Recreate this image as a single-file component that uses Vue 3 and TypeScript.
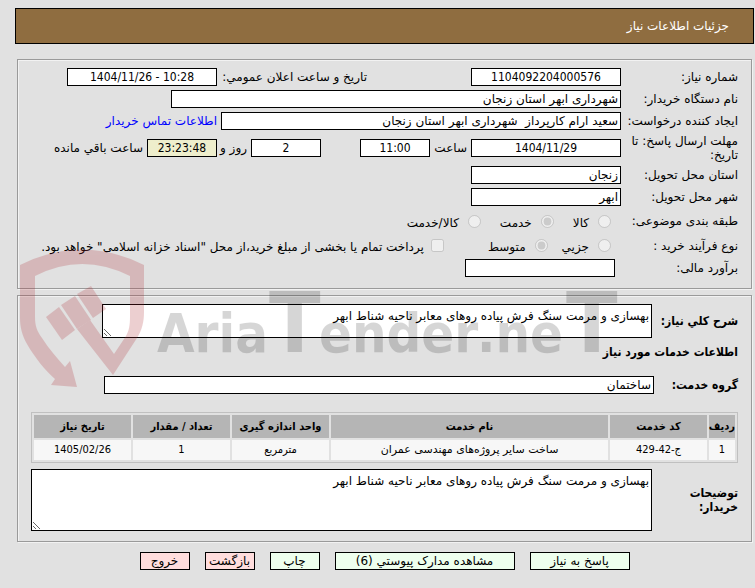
<script setup lang="ts">
import { ref } from 'vue'

interface ServiceRow {
  index: number
  code: string
  name: string
  unit: string
  amount: number
  needDate: string
}

interface Action {
  label: string
  size: 'small' | 'medium' | 'large'
  tone: 'green' | 'red'
}

const needNumber = ref('1104092204000576')
const announcedAt = ref('1404/11/26 - 10:28')
const buyer = ref('شهرداری ابهر استان زنجان')
const requester = ref('سعید ارام کارپرداز  شهرداری ابهر استان زنجان')
const deadlineDate = ref('1404/11/29')
const deadlineTime = ref('11:00')
const daysLeft = ref('2')
const timeLeft = ref('23:23:48')
const province = ref('زنجان')
const city = ref('ابهر')
const estimate = ref('')
const subject = ref('service')
const process = ref('medium')
const treasury = ref(false)
const summary = ref('بهسازی و مرمت سنگ فرش پیاده روهای معابر ناحیه شناط ابهر')
const group = ref('ساختمان')
const notes = ref('بهسازی و مرمت سنگ فرش پیاده روهای معابر ناحیه شناط ابهر')

const services: ServiceRow[] = [
  {
    index: 1,
    code: 'ج-42-429',
    name: 'ساخت سایر پروژه‌های مهندسی عمران',
    unit: 'مترمربع',
    amount: 1,
    needDate: '1405/02/26',
  },
]

const actions: Action[] = [
  { label: 'پاسخ به نیاز', size: 'medium', tone: 'green' },
  { label: 'مشاهده مدارک پیوستي (6)', size: 'large', tone: 'green' },
  { label: 'چاپ', size: 'small', tone: 'green' },
  { label: 'بازگشت', size: 'small', tone: 'red' },
  { label: 'خروج', size: 'small', tone: 'red' },
]
</script>

<template>
  <div class="page" dir="rtl" lang="fa">
    <header class="title-bar"><h1>جزئیات اطلاعات نیاز</h1></header>

    <fieldset class="panel need">
      <div class="row">
        <label class="label" for="need-number">شماره نیاز:</label>
        <input id="need-number" v-model="needNumber" class="field num w150" readonly />
        <label class="label announce" for="announced">تاریخ و ساعت اعلان عمومي:</label>
        <input id="announced" v-model="announcedAt" class="field num w150" dir="ltr" readonly />
      </div>
      <div class="row">
        <label class="label" for="buyer">نام دستگاه خریدار:</label>
        <input id="buyer" v-model="buyer" class="field w450" readonly />
      </div>
      <div class="row">
        <label class="label" for="requester">ایجاد کننده درخواست:</label>
        <input id="requester" v-model="requester" class="field w400" readonly />
        <a class="contact" href="#contact">اطلاعات تماس خریدار</a>
      </div>
      <div class="row tall">
        <label class="label" for="deadline">مهلت ارسال پاسخ: تا تاریخ:</label>
        <input id="deadline" v-model="deadlineDate" class="field num w150" readonly />
        <label class="unit hour" for="deadline-time">ساعت</label>
        <input id="deadline-time" v-model="deadlineTime" class="field num w70" readonly />
        <input id="days" v-model="daysLeft" class="field num w70 days" readonly />
        <label class="unit day" for="days">روز و</label>
        <input id="time-left" v-model="timeLeft" class="field num w70 countdown" readonly />
        <label class="remain" for="time-left">ساعت باقي مانده</label>
      </div>
      <div class="row">
        <label class="label" for="province">استان محل تحویل:</label>
        <input id="province" v-model="province" class="field w150" readonly />
      </div>
      <div class="row">
        <label class="label" for="city">شهر محل تحویل:</label>
        <input id="city" v-model="city" class="field w150" readonly />
      </div>
      <div class="row choice" role="radiogroup" aria-labelledby="subject-label">
        <span id="subject-label" class="label">طبقه بندی موضوعی:</span>
        <label class="option"><input v-model="subject" type="radio" value="goods" disabled /><span>کالا</span></label>
        <label class="option"><input v-model="subject" type="radio" value="service" disabled /><span>خدمت</span></label>
        <label class="option"><input v-model="subject" type="radio" value="both" disabled /><span>کالا/خدمت</span></label>
      </div>
      <div class="row process" role="radiogroup" aria-labelledby="process-label">
        <span id="process-label" class="label">نوع فرآیند خرید :</span>
        <label class="option"><input v-model="process" type="radio" value="minor" disabled /><span>جزیي</span></label>
        <label class="option"><input v-model="process" type="radio" value="medium" disabled /><span>متوسط</span></label>
        <label class="option treasury">
          <input v-model="treasury" type="checkbox" disabled />
          <span>پرداخت تمام یا بخشی از مبلغ خرید،از محل "اسناد خزانه اسلامی" خواهد بود.</span>
        </label>
      </div>
      <div class="row">
        <label class="label estimate" for="estimate">برآورد مالی:</label>
        <input id="estimate" v-model="estimate" class="field w150" readonly />
      </div>
    </fieldset>

    <fieldset class="panel details">
      <div class="row">
        <label class="label strong" for="summary">شرح کلي نیاز:</label>
        <textarea id="summary" v-model="summary" class="field area short" readonly></textarea>
      </div>
      <h2>اطلاعات خدمات مورد نیاز</h2>
      <div class="row group">
        <label class="label strong" for="group">گروه خدمت:</label>
        <input id="group" v-model="group" class="field w550" readonly />
      </div>
      <table class="services">
        <thead>
          <tr>
            <th class="c-index">ردیف</th>
            <th class="c-side">کد خدمت</th>
            <th>نام خدمت</th>
            <th class="c-side">واحد اندازه گیری</th>
            <th class="c-side">تعداد / مقدار</th>
            <th class="c-side">تاریخ نیاز</th>
          </tr>
        </thead>
        <tbody>
          <tr v-for="s in services" :key="s.index">
            <td>{{ s.index }}</td>
            <td>{{ s.code }}</td>
            <td class="name">{{ s.name }}</td>
            <td>{{ s.unit }}</td>
            <td>{{ s.amount }}</td>
            <td>{{ s.needDate }}</td>
          </tr>
        </tbody>
      </table>
      <div class="row">
        <label class="label strong notes" for="notes">توضیحات خریدار:</label>
        <textarea id="notes" v-model="notes" class="field area long" readonly></textarea>
      </div>
    </fieldset>

    <div class="actions">
      <button v-for="a in actions" :key="a.label" type="button" :class="[a.size, a.tone]">{{ a.label }}</button>
    </div>

    <svg class="watermark" width="610" height="150" viewBox="15 245 610 150" direction="ltr" aria-hidden="true">
      <g class="shield">
        <path d="M20 265Q82 234 144 265V312C144 322 142 330 137 338L113 375L77 329L90 320L114 354L126 336C129 331 130 325 130 317V276Q82 252 35 276V317C35 326 37 331 42 338C49 349 57 358 65 367L70 361L77 387L51 385L55 379C45 370 35 358 27 344C22 335 20 327 20 318Z" />
        <path d="M46 317L59 307L75 330L62 340Z" />
        <path d="M61 305L75 296L91 320L77 329Z" />
        <path d="M77 294L91 286L106 309L93 318Z" />
      </g>
      <g class="brand">
        <text x="157" y="352">Aria</text>
        <text class="tee" x="269" y="352">T</text>
        <text x="319" y="352">ender</text>
        <text x="477" y="352">.ne</text>
        <text class="tee" x="566" y="352">T</text>
      </g>
    </svg>
  </div>
</template>

<style>
body {
  background: #e1e1e1;
}
</style>

<style scoped>
.page {
  position: relative;
  padding: 8px 1px 16px 15px;
  color: #000;
  font-family: 'DejaVu Sans', sans-serif;
  font-size: 12px;
  line-height: 14px;
}
.title-bar {
  display: flex;
  align-items: center;
  height: 36px;
  padding: 0 24px;
  border: 1px solid #000;
  box-sizing: border-box;
  background: #8f6d40;
  color: #fff;
}
h1,
h2 {
  margin: 0;
  font-size: 12px;
}
h1 {
  font-weight: normal;
}
.panel {
  min-width: 0;
  margin: 0 2px;
  border: 1px solid #9a9a9a;
  box-shadow: 1px 1px 0 #f2f2f2, inset 1px 1px 0 #f2f2f2;
}
.need {
  margin-top: 15px;
  padding: 6px 13px 9px;
}
.details {
  margin-top: 6px;
  padding: 8px 13px 10px;
}
.row {
  display: flex;
  align-items: center;
  min-height: 22px;
  white-space: nowrap;
}
.tall {
  min-height: 32px;
}
.choice {
  min-height: 26px;
}
.process {
  min-height: 23px;
}
.label {
  flex: none;
  width: 117px;
}
.tall .label {
  white-space: normal;
}
.estimate {
  width: 123px;
}
.strong {
  width: 86px;
  font-weight: bold;
}
.strong,
h2 {
  font-family: 'DejaVu Sans Condensed', 'DejaVu Sans', sans-serif;
}
.notes {
  padding-left: 20px;
  box-sizing: border-box;
  white-space: normal;
}
.announce {
  width: 150px;
  margin-right: 104px;
}
.field {
  box-sizing: border-box;
  flex: none;
  height: 18px;
  margin: 0;
  padding: 1px 2px;
  border: 1px solid #000;
  border-radius: 0;
  background: #fff;
  color: #000;
  font: 12px/14px 'DejaVu Sans', sans-serif;
}
.num {
  font-family: 'DejaVu Sans Condensed', 'DejaVu Sans', sans-serif;
  text-align: center;
}
.w70 {
  width: 70px;
}
.w150 {
  width: 150px;
}
.w400 {
  width: 400px;
}
.w450 {
  width: 450px;
}
.w550 {
  width: 550px;
}
.days {
  margin-right: 39px;
}
.countdown {
  background: #eeeecc;
}
.unit {
  flex: none;
  padding-right: 4px;
  box-sizing: border-box;
}
.hour {
  width: 41px;
}
.day {
  width: 34px;
}
.remain,
.contact {
  margin-right: 4px;
}
.contact {
  color: #00f;
  text-decoration: none;
}
.option {
  display: flex;
  align-items: center;
  gap: 9px;
  margin-right: 10px;
}
.choice .option + .option {
  margin-right: 19px;
}
.process .option + .option {
  margin-right: 14px;
}
.option input {
  width: 13px;
  height: 13px;
  margin: 0;
}
.option span {
  padding-top: 3px;
}
.process .option + .treasury {
  gap: 7px;
  margin-right: 44px;
}
.area {
  padding: 4px 2px;
  resize: both;
  white-space: pre-wrap;
}
.short {
  width: 550px;
  height: 34px;
}
.long {
  flex: 1;
  height: 62px;
}
h2 {
  padding: 7px 0;
}
.group {
  min-height: 38px;
}
.group .label {
  width: 84px;
}
.services {
  width: 100%;
  margin: 8px 0 6px;
  border: 1px solid #c0c0c0;
  border-spacing: 2px;
  table-layout: fixed;
  font-family: 'DejaVu Sans Condensed', 'DejaVu Sans', sans-serif;
  font-size: 11px;
  text-align: center;
  white-space: nowrap;
}
th,
td {
  padding: 0;
}
th {
  height: 23px;
  background: #b5b5b5;
}
td {
  height: 20px;
  background: #f7f7f7;
}
.name {
  font-family: 'DejaVu Sans', sans-serif;
}
.c-index {
  width: 26px;
}
.c-side {
  width: 97px;
}
.actions {
  display: flex;
  justify-content: center;
  gap: 15px;
  margin-top: 10px;
}
button {
  box-sizing: border-box;
  height: 18px;
  padding: 0;
  border: 1px solid #000;
  border-radius: 0;
  color: #000;
  font: 12px/14px 'DejaVu Sans', sans-serif;
  white-space: nowrap;
}
.small {
  width: 50px;
}
.medium {
  width: 100px;
}
.large {
  width: 180px;
}
.green {
  background: #eeffee;
}
.red {
  background: #ffdddd;
}
.watermark {
  position: absolute;
  top: 245px;
  left: 15px;
  pointer-events: none;
}
.shield {
  fill: #ae2830;
  opacity: 0.22;
}
.brand {
  fill: #000;
  opacity: 0.155;
  font: bold 54px 'DejaVu Sans Condensed', sans-serif;
}
.tee {
  font-size: 84px;
}
</style>
